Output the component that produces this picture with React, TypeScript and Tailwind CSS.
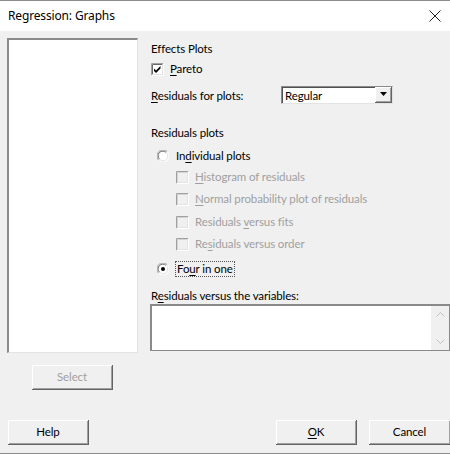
import React from "react";

const font = { fontFamily: 'Lato, "Noto Sans", Arial, sans-serif' };
const titleFont = { fontFamily: '"Noto Sans", "Open Sans", Arial, sans-serif' };

function U({ children }: { children: React.ReactNode }) {
  return <span className="underline underline-offset-[2px] decoration-[1px]">{children}</span>;
}

function CheckBox({ checked, disabled }: { checked?: boolean; disabled?: boolean }) {
  return (
    <svg width="13" height="13" viewBox="0 0 13 13" className="shrink-0">
      <rect x="0" y="0" width="13" height="13" fill={disabled ? "#f0f0f0" : "#ffffff"} />
      <path d="M0.5 12.5 V0.5 H12.5" stroke="#a0a0a0" fill="none" />
      <path d="M1.5 11.5 V1.5 H11.5" stroke={disabled ? "#d4d4d4" : "#696969"} fill="none" />
      <path d="M0.5 12.5 H12.5 V0.5" stroke="#ffffff" fill="none" />
      <path d="M1.5 11.5 H11.5 V1.5" stroke="#e3e3e3" fill="none" />
      {checked && <path d="M3 5.5 L5 7.5 L9.5 3 L9.5 5.5 L5 10 L3 8 Z" fill="#000" />}
    </svg>
  );
}

function Radio({ checked }: { checked?: boolean }) {
  return (
    <svg width="12" height="12" viewBox="0 0 12 12" className="shrink-0">
      <circle cx="6" cy="6" r="5.5" fill="#ffffff" />
      <path d="M1.6 10.2 A5.5 5.5 0 0 1 10.2 1.6" stroke="#a0a0a0" fill="none" />
      <path d="M2.5 9.2 A4.4 4.4 0 0 1 9.2 2.5" stroke="#696969" fill="none" />
      <path d="M10.4 1.8 A5.5 5.5 0 0 1 1.8 10.4" stroke="#ffffff" fill="none" />
      <path d="M9.4 2.8 A4.4 4.4 0 0 1 2.8 9.4" stroke="#e3e3e3" fill="none" />
      {checked && <circle cx="6" cy="6" r="2" fill="#000" />}
    </svg>
  );
}

function Btn({ children, disabled, w }: { children: React.ReactNode; disabled?: boolean; w: string }) {
  return (
    <div
      className={`${w} h-[25px] flex items-center justify-center bg-[#f0f0f0] border-r border-b border-[#646464] shadow-[inset_1px_1px_0_#ffffff,inset_-1px_-1px_0_#a0a0a0] ${disabled ? "text-[#a0a0a0]" : "text-black"}`}
    >
      {children}
    </div>
  );
}

export default function App() {
  return (
    <div style={font} className="w-[450px] h-[454px] flex flex-col overflow-hidden text-[11.5px] tracking-[-0.12px] leading-[16px] text-black bg-[#f0f0f0] border-t border-b border-[#8c8c8c]">
      <div className="h-[30px] shrink-0 bg-white flex items-center justify-between pl-[8px] pr-[8px]">
        <span style={titleFont} className="text-[12px] tracking-[-0.15px]">Regression: Graphs</span>
        <svg width="12" height="12" viewBox="0 0 12 12" className="mr-[1px]">
          <path d="M0.5 0.5 L11.5 11.5 M11.5 0.5 L0.5 11.5" stroke="#222" strokeWidth="1" />
        </svg>
      </div>
      <div className="flex-1 flex flex-col">
        <div className="flex">
          <div className="flex flex-col pl-[7px] pt-[7px] w-[150px] shrink-0">
            <div className="w-[131px] h-[315px] bg-white border-t-2 border-l-2 border-t-[#8a8a8a] border-l-[#8a8a8a] border-r border-b border-r-[#e3e3e3] border-b-[#e3e3e3]" />
            <div className="mt-[12px] ml-[25px]">
              <Btn w="w-[81px]" disabled>Select</Btn>
            </div>
          </div>
          <div className="flex-1 flex flex-col pt-[10px]">
            <div className="h-[16px] pl-[1px]">Effects Plots</div>
            <div className="h-[16px] mt-[4px] pl-[1px] flex items-center gap-[6px]">
              <CheckBox checked />
              <span><U>P</U>areto</span>
            </div>
            <div className="h-[19px] mt-[8px] pl-[1px] flex items-center">
              <span className="w-[130px] pt-[3px]"><U>R</U>esiduals for plots:</span>
              <div className="w-[112px] h-[18px] bg-white flex items-stretch border-t border-l border-[#8a8a8a] border-r border-b border-r-[#e3e3e3] border-b-[#e3e3e3]">
                <span className="flex-1 pl-[2px] leading-[15px] border-t border-l border-[#505050] border-r-0 border-b-0">Regular</span>
                <div className="w-[17px] bg-[#f0f0f0] flex items-center justify-center border-r border-b border-[#646464] shadow-[inset_1px_1px_0_#ffffff,inset_-1px_-1px_0_#a0a0a0]">
                  <svg width="7" height="4" viewBox="0 0 7 4"><path d="M0 0 H7 L3.5 4 Z" fill="#000" /></svg>
                </div>
              </div>
            </div>
            <div className="h-[16px] mt-[21px] pl-[1px]">Residuals plots</div>
            <div className="h-[16px] mt-[7px] pl-[7px] flex items-center gap-[7px]">
              <Radio />
              <span>In<U>d</U>ividual plots</span>
            </div>
            <div className="flex flex-col pl-[26px] text-[#a0a0a0]">
              <div className="h-[16px] mt-[5px] flex items-center gap-[6px]">
                <CheckBox disabled />
                <span><U>H</U>istogram of residuals</span>
              </div>
              <div className="h-[16px] mt-[6px] flex items-center gap-[6px]">
                <CheckBox disabled />
                <span><U>N</U>ormal probability plot of residuals</span>
              </div>
              <div className="h-[16px] mt-[7px] flex items-center gap-[6px]">
                <CheckBox disabled />
                <span>Residuals <U>v</U>ersus fits</span>
              </div>
              <div className="h-[16px] mt-[6px] flex items-center gap-[6px]">
                <CheckBox disabled />
                <span>Re<U>s</U>iduals versus order</span>
              </div>
            </div>
            <div className="h-[16px] mt-[9px] pl-[7px] flex items-center gap-[6px]">
              <Radio checked />
              <span className="border border-dotted border-[#555] px-[1px] leading-[14px] h-[16px]">Fo<U>u</U>r in one</span>
            </div>
            <div className="h-[15px] mt-[12px] pl-[1px] leading-[14px]">R<U>e</U>siduals versus the variables:</div>
            <div className="h-[47px] w-[300px] bg-white flex border-t-2 border-l-2 border-[#8a8a8a] border-r border-b border-r-[#8a8a8a] border-b-[#8a8a8a]">
              <div className="flex-1" />
              <div className="w-[18px] bg-[#f0f0f0] flex flex-col items-center justify-between py-[6px]">
                <svg width="9" height="5" viewBox="0 0 9 5"><path d="M0.5 4.5 L4.5 0.5 L8.5 4.5" stroke="#c0c0c0" fill="none" /></svg>
                <svg width="9" height="5" viewBox="0 0 9 5"><path d="M0.5 0.5 L4.5 4.5 L8.5 0.5" stroke="#c0c0c0" fill="none" /></svg>
              </div>
            </div>
          </div>
        </div>
        <div className="flex mt-[30px]">
          <div className="ml-[8px]">
            <Btn w="w-[81px]">Help</Btn>
          </div>
          <div className="ml-[187px]">
            <Btn w="w-[81px]"><U>O</U>K</Btn>
          </div>
          <div className="ml-[12px]">
            <Btn w="w-[82px]">Cancel</Btn>
          </div>
        </div>
      </div>
    </div>
  );
}
